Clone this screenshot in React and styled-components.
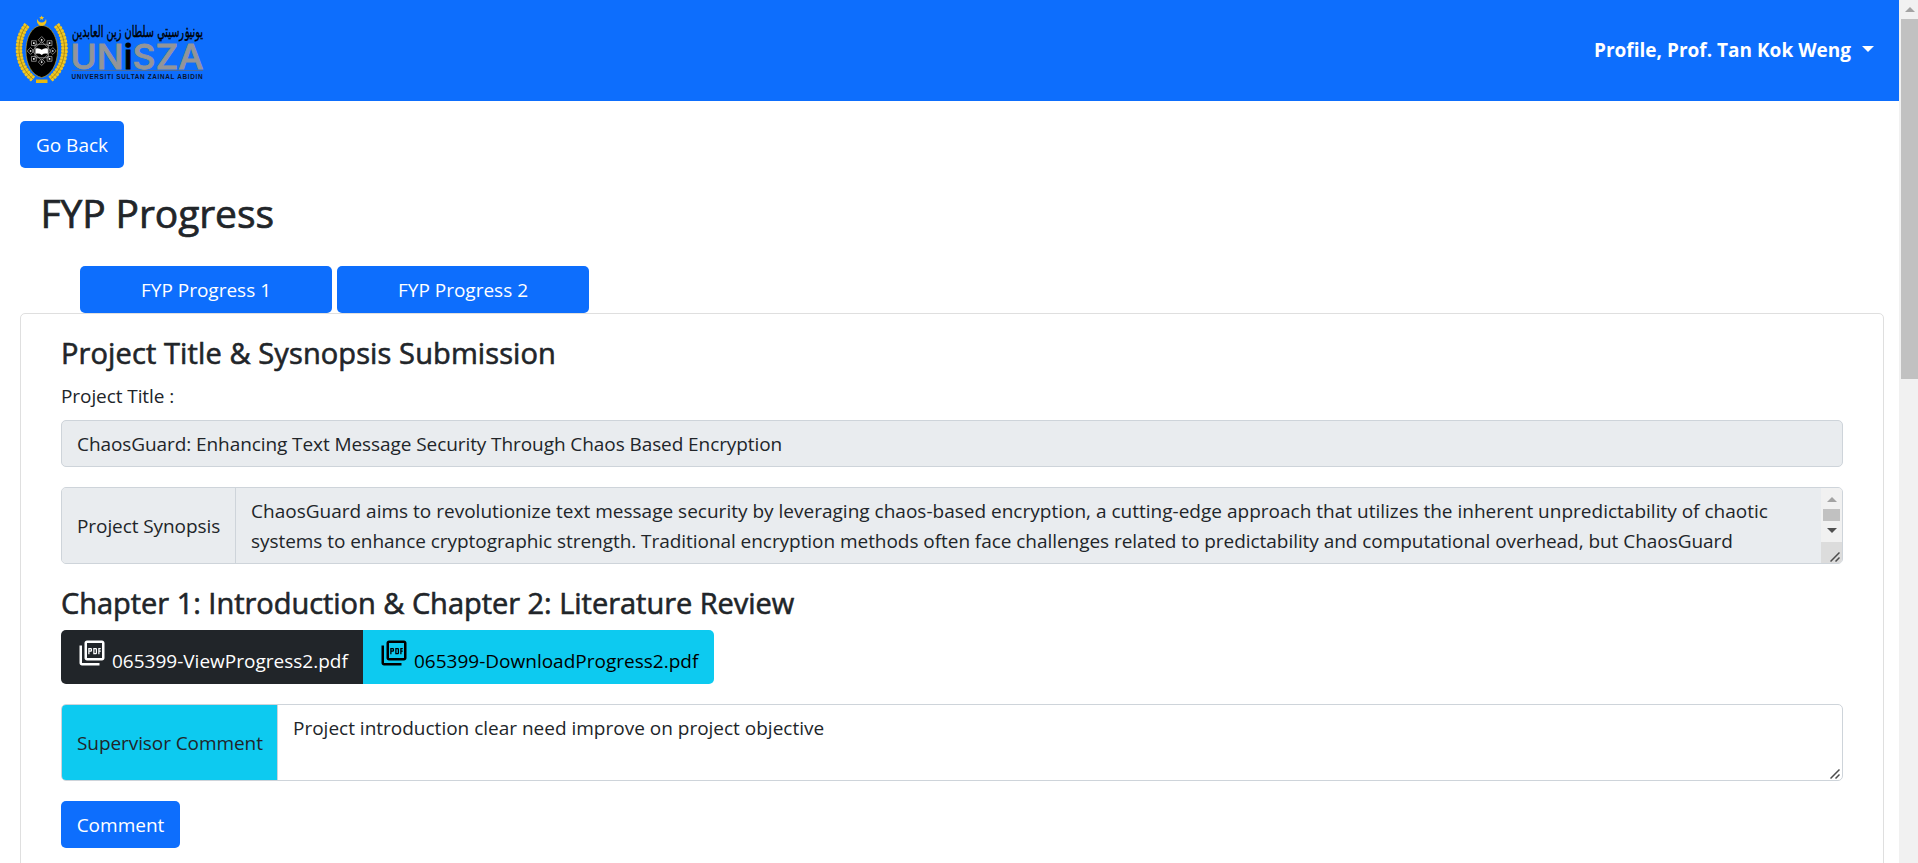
import React from "react";
import styled, { createGlobalStyle } from "styled-components";
import { MdOutlinePictureAsPdf } from "react-icons/md";

const GlobalStyle = createGlobalStyle`
  *, *::before, *::after { box-sizing: border-box; }
  html, body { margin: 0; height: 100%; overflow: hidden; background: #fff; }
  body {
    font-family: "Open Sans", "Noto Sans", sans-serif;
    font-size: 19px;
    line-height: 30px;
    letter-spacing: -0.08px;
    color: #212529;
  }
`;

const Window = styled.div`
  display: flex;
  height: 863px;
  overflow: hidden;
`;

const Page = styled.div`
  flex: 1;
  min-width: 0;
`;

const Navbar = styled.header`
  display: flex;
  align-items: center;
  justify-content: space-between;
  height: 101px;
  padding: 0 25px 0 15px;
  background: #0d6efd;
`;

const ProfileToggle = styled.a`
  display: flex;
  align-items: center;
  gap: 11px;
  padding-bottom: 2px;
  color: #fff;
  font-weight: 700;
  letter-spacing: 0.01px;
`;

const Caret = styled.span`
  border: 6px solid transparent;
  border-top-color: #fff;
  border-bottom: 0;
  margin-bottom: 1px;
`;

const Content = styled.main`
  padding: 20px 15px 0 20px;
`;

const Button = styled.button`
  display: flex;
  align-items: center;
  justify-content: center;
  width: ${(p) => p.$width}px;
  height: 47px;
  padding: 1px 0 0;
  border: 0;
  border-radius: 5px;
  background: #0d6efd;
  color: #fff;
  font: inherit;
  letter-spacing: 0;
  white-space: nowrap;
`;

const PageTitle = styled.h2`
  margin: 21px 0 29px 20.5px;
  font-size: 39px;
  line-height: 48px;
  font-weight: 500;
  letter-spacing: -0.1px;
  -webkit-text-stroke: 0.7px currentColor;
`;

const Tabs = styled.nav`
  display: flex;
  gap: 5px;
  padding-left: 60px;
`;

const Card = styled.section`
  height: 700px;
  padding: 20px 40px;
  border: 1px solid #dfdfdf;
  border-radius: 5px;
`;

const SectionTitle = styled.h4`
  margin: 0 0 10px;
  padding-top: 1px;
  font-size: 29px;
  line-height: 35px;
  font-weight: 500;
  letter-spacing: ${(p) => p.$spacing}px;
  -webkit-text-stroke: 0.6px currentColor;
`;

const Label = styled.label`
  display: block;
  height: 30px;
  margin-bottom: 10px;
  padding-top: 1px;
`;

const Input = styled.div`
  height: 47px;
  margin-bottom: 20px;
  padding: 8px 15px;
  border: 1px solid #ced4da;
  border-radius: 5px;
  background: #e9ecef;
`;

const InputGroup = styled.div`
  position: relative;
  display: flex;
  height: 77px;
  margin-bottom: 20px;
  border: 1px solid #ced4da;
  border-radius: 5px;
  overflow: hidden;
  background: ${(p) => (p.$readOnly ? "#e9ecef" : "#fff")};
`;

const GroupLabel = styled.span`
  display: flex;
  align-items: center;
  flex: none;
  width: ${(p) => p.$width}px;
  padding-left: 15px;
  border-right: 1px solid #ced4da;
  background: ${(p) => (p.$info ? "#0dcaf0" : "#e9ecef")};
  white-space: nowrap;
`;

const TextBox = styled.div`
  flex: 1;
  padding: 8px 15px;
  white-space: nowrap;
`;

const TextLine = styled.div`
  letter-spacing: ${(p) => p.$spacing}px;
`;

const BoxScrollbar = styled.div`
  display: flex;
  flex-direction: column;
  align-items: center;
  width: 21px;
  background: #f1f1f1;
`;

const Arrow = styled.span`
  width: 0;
  border: 5px solid transparent;
  ${(p) =>
    p.$down
      ? "border-top-color: #505050; border-bottom: 0; margin: 7px 0 9px;"
      : `border-bottom-color: #a3a3a3; border-top: 0; margin: ${p.$top || 9}px 0 7px;`}
`;

const BoxThumb = styled.span`
  width: 17px;
  height: 12px;
  background: #c1c1c1;
`;

const Corner = styled.span`
  width: 21px;
  flex: 1;
  background: #dcdcdc;
`;

const Resizer = styled.svg`
  position: absolute;
  right: 2px;
  bottom: 1px;
`;

const ButtonGroup = styled.div`
  display: flex;
  margin-bottom: 20px;
`;

const FileButton = styled.a`
  display: flex;
  width: ${(p) => p.$width}px;
  height: 54px;
  padding: 8px 0 0 16px;
  gap: 5px;
  background: ${(p) => (p.$dark ? "#212529" : "#0dcaf0")};
  color: ${(p) => (p.$dark ? "#fff" : "#000")};
  border-radius: ${(p) => (p.$dark ? "5px 0 0 5px" : "0 5px 5px 0")};
  letter-spacing: 0;
  svg { flex: none; }
  span { padding-top: 8px; }
`;

const Scrollbar = styled.aside`
  display: flex;
  flex-direction: column;
  align-items: flex-end;
  width: 19px;
  background: #f1f1f1;
`;

const ScrollTop = styled.div`
  display: flex;
  justify-content: center;
  width: 17px;
  height: 19px;
`;

const ScrollThumb = styled.div`
  width: 17px;
  height: 360px;
  background: #c1c1c1;
`;

const LogoImage = styled.svg`
  overflow: visible;
  letter-spacing: 0;
`;

function ResizeHandle() {
  return (
    <Resizer width="10" height="10" viewBox="0 0 10 10" stroke="#4c4c4c" strokeWidth="1.5">
      <path d="M0.5 9.5 9.5 0.5M5.5 9.5 9.5 5.5" />
    </Resizer>
  );
}

function Laurel() {
  const curve = "M11 25C-1 40 0 65 17 79";
  return (
    <g fill="none">
      <path d={curve} stroke="#d8ae16" strokeWidth="5.5" />
      <path d={curve} stroke="#f0c824" strokeWidth="6.5" strokeDasharray="2.2 1.2" />
      <path d={curve} stroke="#8f7416" strokeWidth="0.7" />
    </g>
  );
}

function Crest() {
  return (
    <g>
      <Laurel />
      <g transform="translate(51.5 0) scale(-1 1)"><Laurel /></g>
      <path d="M25.7 25.5C36 26 41.5 38 41.5 51S35 75.5 25.7 77.5C16 75.5 10 64 10 51S15.5 26 25.7 25.5Z" fill="#000" stroke="#d9ad12" strokeWidth="0.6" />
      <path d="M21.5 19a4.7 4.7 0 1 0 8.4 0 4.3 4.3 0 0 1-8.4 0Z" fill="#f2c51c" />
      <path d="m25.7 15.500.7 1.6 1.800.1-1.400 1.200.500 1.700-1.600-1-1.600 1 .500-1.700-1.400-1.200 1.800-.100Z" fill="#f2c51c" />
      <path d="M20 79.5h11.500v3.500H20Z" fill="#e8b90f" />
      <g fill="none" stroke="#a9a9a9" strokeWidth="0.7">
        {[0, 45, 90, 135, 180, 225, 270, 315].map((a) => (
          <g key={a} transform={`rotate(${a} 25.7 51)`}>
            <path d="m25.7 36.5 3.4 3.4-3.4 3.4-3.4-3.4Z" />
            <path d="m25.7 38.8 1.1 1.1-1.1 1.1-1.1-1.1Z" fill="#fff" stroke="none" />
          </g>
        ))}
        <path d="M19 44.3h13.4v13.4H19Z" />
        <path d="m25.7 41.5 9.5 9.5-9.5 9.5-9.5-9.5Z" />
      </g>
      <path d="M19.5 48.5q4-.8 6.2 1.3 2.2-2.1 6.2-1.3v5.3q-4-.8-6.2 1.2-2.2-2-6.2-1.2Z" fill="#fff" />
    </g>
  );
}

function Logo() {
  return (
    <LogoImage width="190" height="80" viewBox="0 0 190 80">
      <g transform="translate(1 -11)">
        <Crest />
      </g>
      <text x="122.5" y="25.5" textAnchor="middle" textLength="131" lengthAdjust="spacingAndGlyphs"
        fontFamily="DejaVu Sans" fontSize="16" fill="#000" stroke="#000" strokeWidth="0.4">يونيۏرسيتي سلطان زين العابدين</text>
      <text x="55.5" y="57.5" textLength="133" lengthAdjust="spacingAndGlyphs" fontFamily="Inter"
        fontSize="33.5" fontWeight="500" fill="#939598" stroke="#939598" strokeWidth="0.8">UN<tspan fill="#000" stroke="#000">i</tspan>SZA</text>
      <path d="M57 59.5h131" stroke="#4a6a9a" strokeWidth="1" />
      <text x="56.5" y="67.5" textLength="131" lengthAdjust="spacing" fontFamily="Liberation Sans"
        fontSize="6.4" fontWeight="700" fill="#0a1330">UNIVERSITI SULTAN ZAINAL ABIDIN</text>
    </LogoImage>
  );
}

export default function App() {
  return (
    <Window>
      <GlobalStyle />
      <Page>
        <Navbar>
          <Logo />
          <ProfileToggle>
            Profile, Prof. Tan Kok Weng
            <Caret />
          </ProfileToggle>
        </Navbar>
        <Content>
          <Button $width={104}>Go Back</Button>
          <PageTitle>FYP Progress</PageTitle>
          <Tabs>
            <Button $width={252}>FYP Progress 1</Button>
            <Button $width={252}>FYP Progress 2</Button>
          </Tabs>
          <Card>
            <SectionTitle $spacing={0.11}>Project Title &amp; Sysnopsis Submission</SectionTitle>
            <Label>Project Title :</Label>
            <Input>ChaosGuard: Enhancing Text Message Security Through Chaos Based Encryption</Input>
            <InputGroup $readOnly>
              <GroupLabel $width={174}>Project Synopsis</GroupLabel>
              <TextBox>
                <TextLine $spacing={0.007}>
                  ChaosGuard aims to revolutionize text message security by leveraging chaos-based encryption, a cutting-edge approach that utilizes the inherent unpredictability of chaotic
                </TextLine>
                <TextLine $spacing={-0.05}>
                  systems to enhance cryptographic strength. Traditional encryption methods often face challenges related to predictability and computational overhead, but ChaosGuard
                </TextLine>
              </TextBox>
              <BoxScrollbar>
                <Arrow />
                <BoxThumb />
                <Arrow $down />
                <Corner />
              </BoxScrollbar>
              <ResizeHandle />
            </InputGroup>
            <SectionTitle $spacing={-0.03}>Chapter 1: Introduction &amp; Chapter 2: Literature Review</SectionTitle>
            <ButtonGroup>
              <FileButton $dark $width={302}>
                <MdOutlinePictureAsPdf size={30} />
                <span>065399-ViewProgress2.pdf</span>
              </FileButton>
              <FileButton $width={351}>
                <MdOutlinePictureAsPdf size={30} />
                <span>065399-DownloadProgress2.pdf</span>
              </FileButton>
            </ButtonGroup>
            <InputGroup>
              <GroupLabel $info $width={216}>Supervisor Comment</GroupLabel>
              <TextBox>
                <TextLine $spacing={-0.005}>Project introduction clear need improve on project objective</TextLine>
              </TextBox>
              <ResizeHandle />
            </InputGroup>
            <Button $width={119}>Comment</Button>
          </Card>
        </Content>
      </Page>
      <Scrollbar>
        <ScrollTop>
          <Arrow $top={7} />
        </ScrollTop>
        <ScrollThumb />
      </Scrollbar>
    </Window>
  );
}
